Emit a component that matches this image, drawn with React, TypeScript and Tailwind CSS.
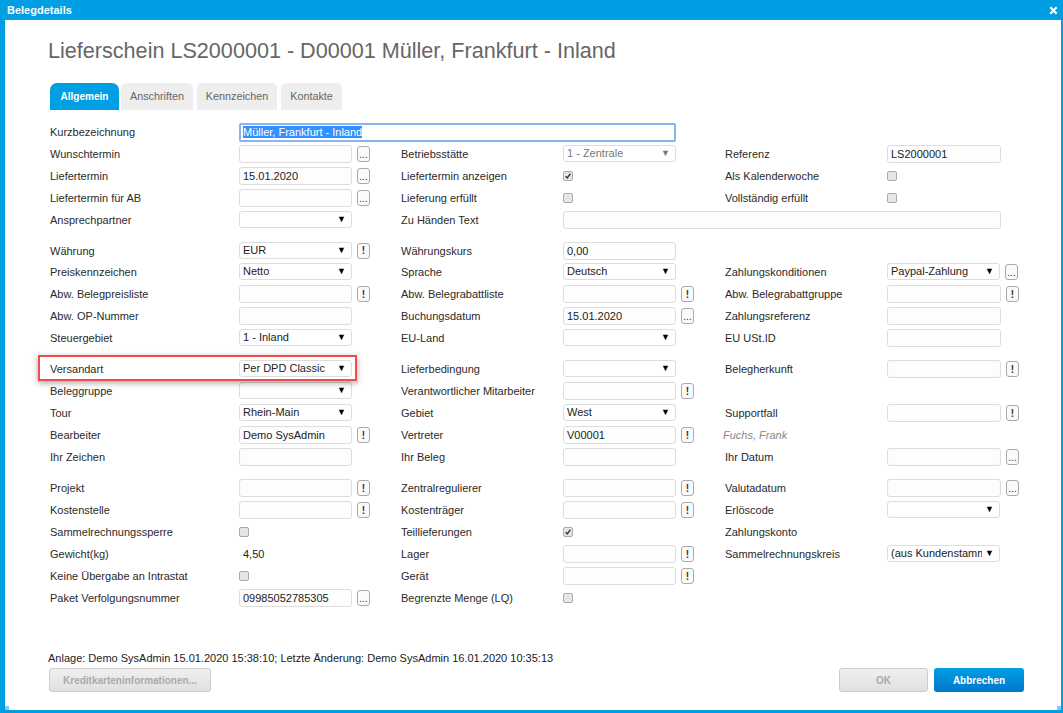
import type { ReactNode } from "react";

function Row({ children, gap, className = "" }: { children: ReactNode; gap?: boolean; className?: string }) {
  return (
    <div className={`grid h-[22px] grid-cols-[189px_162px_162px_162px_162px_auto] items-center ${gap ? "mt-[9px]" : ""} ${className}`}>
      {children}
    </div>
  );
}

function Label({ children }: { children?: ReactNode }) {
  return <div className="whitespace-nowrap text-[11px] text-[#2a2a2a]">{children}</div>;
}

function SmallButton({ kind }: { kind: "dots" | "bang" }) {
  return (
    <div
      className={`flex h-[16px] w-[13px] shrink-0 justify-center rounded-[3px] border border-[#aaa] bg-[#fafafa] text-[#333] ${
        kind === "bang" ? "items-center text-[10px] font-bold" : "items-end text-[10px] leading-[13px]"
      }`}
    >
      {kind === "bang" ? "!" : "..."}
    </div>
  );
}

function Input({ value, btn, className = "w-[113px]" }: { value?: string; btn?: "dots" | "bang"; className?: string }) {
  return (
    <div className="flex items-center gap-[5px]">
      <div className={`h-[18px] truncate rounded-[3px] border border-[#ddd] bg-[#fdfdfd] px-[3px] text-[11px] leading-[16px] text-[#222] ${className}`}>
        {value}
      </div>
      {btn && <SmallButton kind={btn} />}
    </div>
  );
}

function Select({ value, btn, disabled, clip }: { value?: string; btn?: "dots" | "bang"; disabled?: boolean; clip?: boolean }) {
  return (
    <div className="-mt-px flex items-center gap-[5px]">
      <div className={`flex h-[17px] w-[113px] items-center justify-between rounded-[3px] border border-[#ddd] pl-[3px] pr-[5px] text-[11px] ${disabled ? "text-[#777]" : "text-[#222]"}`}>
        <span className={`overflow-hidden whitespace-nowrap ${clip ? "w-[91px]" : ""}`}>{value}</span>
        <span className={`text-[9px] leading-none ${disabled ? "text-[#777]" : "text-black"}`}>▼</span>
      </div>
      {btn && <SmallButton kind={btn} />}
    </div>
  );
}

function Check({ checked }: { checked?: boolean }) {
  return (
    <div className="-mt-px flex h-[10px] w-[10px] items-center justify-center rounded-[2px] border border-[#aaa] bg-[#e6e6e6]">
      {checked && (
        <svg viewBox="0 0 10 10" className="h-[10px] w-[10px]">
          <path d="M2 5.2 L4 7.4 L8 2.2" fill="none" stroke="#333" strokeWidth="1.7" />
        </svg>
      )}
    </div>
  );
}

const tabs = [
  { name: "Anschriften", w: "w-[72px]", ml: "ml-[2px]" },
  { name: "Kennzeichen", w: "w-[80px]", ml: "ml-[4px]" },
  { name: "Kontakte", w: "w-[61px]", ml: "ml-[4px]" },
];

export default function App() {
  return (
    <div className="relative flex h-[713px] w-[1063px] flex-col overflow-hidden border-b-[3px] border-l-[5px] border-r-[2px] border-[#009fe3] bg-white font-['Liberation_Sans',Arial,sans-serif]">
      <div className="-ml-[5px] -mr-[2px] flex h-[20px] shrink-0 items-center justify-between bg-[#009fe3] pl-[7px] pr-[5px] text-[11px] font-bold text-white">
        <span>Belegdetails</span>
        <svg viewBox="0 0 10 10" className="h-[9px] w-[9px]">
          <path d="M1.5 1.5 L8.5 8.5 M8.5 1.5 L1.5 8.5" stroke="white" strokeWidth="2.4" />
        </svg>
      </div>

      <div className="flex flex-1 flex-col pl-[43px]">
        <h1 className="mt-[17px] h-[27px] whitespace-nowrap text-[21.6px] leading-[27px] text-[#666]">
          Lieferschein LS2000001 - D00001 Müller, Frankfurt - Inland
        </h1>

        <div className="ml-[2px] mt-[19px] flex h-[27px]">
          <div className="flex w-[69px] items-center justify-center rounded-t-[7px] bg-[#009fe3] text-[10px] font-bold text-white">Allgemein</div>
          {tabs.map((t) => (
            <div key={t.name} className={`flex items-center justify-center rounded-t-[5px] bg-[#eee] text-[10.8px] text-[#666] ${t.w} ${t.ml}`}>
              {t.name}
            </div>
          ))}
        </div>

        <div className="ml-[2px] mt-[11px]">
          <Row>
            <Label>Kurzbezeichnung</Label>
            <div className="col-span-3 h-[19px] w-[437px] rounded-[2px] border-2 border-[#8ab4f0] bg-white px-[2px] text-[11px] leading-[15px]">
              <span className="bg-[#3390ff] text-white">Müller, Frankfurt - Inland</span>
            </div>
          </Row>
          <Row>
            <Label>Wunschtermin</Label>
            <Input btn="dots" />
            <Label>Betriebsstätte</Label>
            <Select value="1 - Zentrale" disabled />
            <Label>Referenz</Label>
            <Input value="LS2000001" className="w-[114px]" />
          </Row>
          <Row>
            <Label>Liefertermin</Label>
            <Input value="15.01.2020" btn="dots" />
            <Label>Liefertermin anzeigen</Label>
            <Check checked />
            <Label>Als Kalenderwoche</Label>
            <Check />
          </Row>
          <Row>
            <Label>Liefertermin für AB</Label>
            <Input btn="dots" />
            <Label>Lieferung erfüllt</Label>
            <Check />
            <Label>Vollständig erfüllt</Label>
            <Check />
          </Row>
          <Row>
            <Label>Ansprechpartner</Label>
            <Select />
            <Label>Zu Händen Text</Label>
            <div className="col-span-3">
              <Input className="w-[438px]" />
            </div>
          </Row>

          <Row gap className="-mb-px">
            <Label>Währung</Label>
            <Select value="EUR" btn="bang" />
            <Label>Währungskurs</Label>
            <Input value="0,00" />
            <div className="col-span-2" />
          </Row>
          <Row>
            <Label>Preiskennzeichen</Label>
            <Select value="Netto" />
            <Label>Sprache</Label>
            <Select value="Deutsch" />
            <Label>Zahlungskonditionen</Label>
            <Select value="Paypal-Zahlung" btn="dots" />
          </Row>
          <Row>
            <Label>Abw. Belegpreisliste</Label>
            <Input btn="bang" />
            <Label>Abw. Belegrabattliste</Label>
            <Input btn="bang" />
            <Label>Abw. Belegrabattgruppe</Label>
            <Input btn="bang" className="w-[114px]" />
          </Row>
          <Row>
            <Label>Abw. OP-Nummer</Label>
            <Input />
            <Label>Buchungsdatum</Label>
            <Input value="15.01.2020" btn="dots" />
            <Label>Zahlungsreferenz</Label>
            <Input className="w-[114px]" />
          </Row>
          <Row>
            <Label>Steuergebiet</Label>
            <Select value="1 - Inland" />
            <Label>EU-Land</Label>
            <Select />
            <Label>EU USt.ID</Label>
            <Input className="w-[114px]" />
          </Row>

          <Row gap className="relative">
            <Label>Versandart</Label>
            <Select value="Per DPD Classic" />
            <Label>Lieferbedingung</Label>
            <Select />
            <Label>Belegherkunft</Label>
            <Input btn="bang" className="w-[114px]" />
            <div className="absolute -left-[12px] -top-[3px] h-[26px] w-[319px] border-2 border-[#f44a4a] shadow-[0_2px_6px_rgba(0,0,0,0.35)]" />
          </Row>
          <Row>
            <Label>Beleggruppe</Label>
            <Select />
            <Label>Verantwortlicher Mitarbeiter</Label>
            <Input btn="bang" />
            <div className="col-span-2" />
          </Row>
          <Row>
            <Label>Tour</Label>
            <Select value="Rhein-Main" />
            <Label>Gebiet</Label>
            <Select value="West" />
            <Label>Supportfall</Label>
            <Input btn="bang" className="w-[114px]" />
          </Row>
          <Row>
            <Label>Bearbeiter</Label>
            <Input value="Demo SysAdmin" btn="bang" />
            <Label>Vertreter</Label>
            <Input value="V00001" btn="bang" />
            <div className="-ml-[2px] whitespace-nowrap text-[11px] italic text-[#888]">Fuchs, Frank</div>
            <div />
          </Row>
          <Row>
            <Label>Ihr Zeichen</Label>
            <Input />
            <Label>Ihr Beleg</Label>
            <Input />
            <Label>Ihr Datum</Label>
            <Input btn="dots" className="w-[114px]" />
          </Row>

          <Row gap>
            <Label>Projekt</Label>
            <Input btn="bang" />
            <Label>Zentralregulierer</Label>
            <Input btn="bang" />
            <Label>Valutadatum</Label>
            <Input btn="dots" className="w-[114px]" />
          </Row>
          <Row>
            <Label>Kostenstelle</Label>
            <Input btn="bang" />
            <Label>Kostenträger</Label>
            <Input btn="bang" />
            <Label>Erlöscode</Label>
            <Select />
          </Row>
          <Row>
            <Label>Sammelrechnungssperre</Label>
            <Check />
            <Label>Teillieferungen</Label>
            <Check checked />
            <Label>Zahlungskonto</Label>
            <div />
          </Row>
          <Row>
            <Label>Gewicht(kg)</Label>
            <div className="pl-[4px] text-[11px] text-[#222]">4,50</div>
            <Label>Lager</Label>
            <Input btn="bang" />
            <Label>Sammelrechnungskreis</Label>
            <Select value="(aus Kundenstamm)" clip />
          </Row>
          <Row>
            <Label>Keine Übergabe an Intrastat</Label>
            <Check />
            <Label>Gerät</Label>
            <Input btn="bang" />
            <div className="col-span-2" />
          </Row>
          <Row>
            <Label>Paket Verfolgungsnummer</Label>
            <Input value="09985052785305" btn="dots" />
            <Label>Begrenzte Menge (LQ)</Label>
            <Check />
            <div className="col-span-2" />
          </Row>
        </div>

        <div className="mt-auto pb-[18px]">
          <div className="text-[11px] leading-[13px] text-[#222]">
            Anlage: Demo SysAdmin 15.01.2020 15:38:10; Letzte Änderung: Demo SysAdmin 16.01.2020 10:35:13
          </div>
          <div className="mt-[3px] flex items-center pl-[1px] pr-[37px]">
            <div className="flex h-[24px] w-[162px] items-center justify-center rounded-[3px] border border-[#ccc] bg-linear-to-b from-[#f0f0f0] to-[#e0e0e0] text-[10px] font-bold text-[#aaa]">
              Kreditkarteninformationen...
            </div>
            <div className="ml-auto flex h-[24px] w-[89px] items-center justify-center rounded-[3px] border border-[#ccc] bg-linear-to-b from-[#f0f0f0] to-[#e0e0e0] text-[10px] font-bold text-[#aaa]">
              OK
            </div>
            <div className="ml-[6px] flex h-[24px] w-[90px] items-center justify-center rounded-[3px] bg-linear-to-b from-[#009fe3] to-[#0077cc] text-[10px] font-bold text-white">
              Abbrechen
            </div>
          </div>
        </div>
      </div>

      <div className="absolute bottom-0 left-0 h-[4px] w-[4px] bg-[#7fcdf0]" />
      <div className="absolute bottom-0 right-0 h-[4px] w-[4px] bg-[#7fcdf0]" />
    </div>
  );
}
